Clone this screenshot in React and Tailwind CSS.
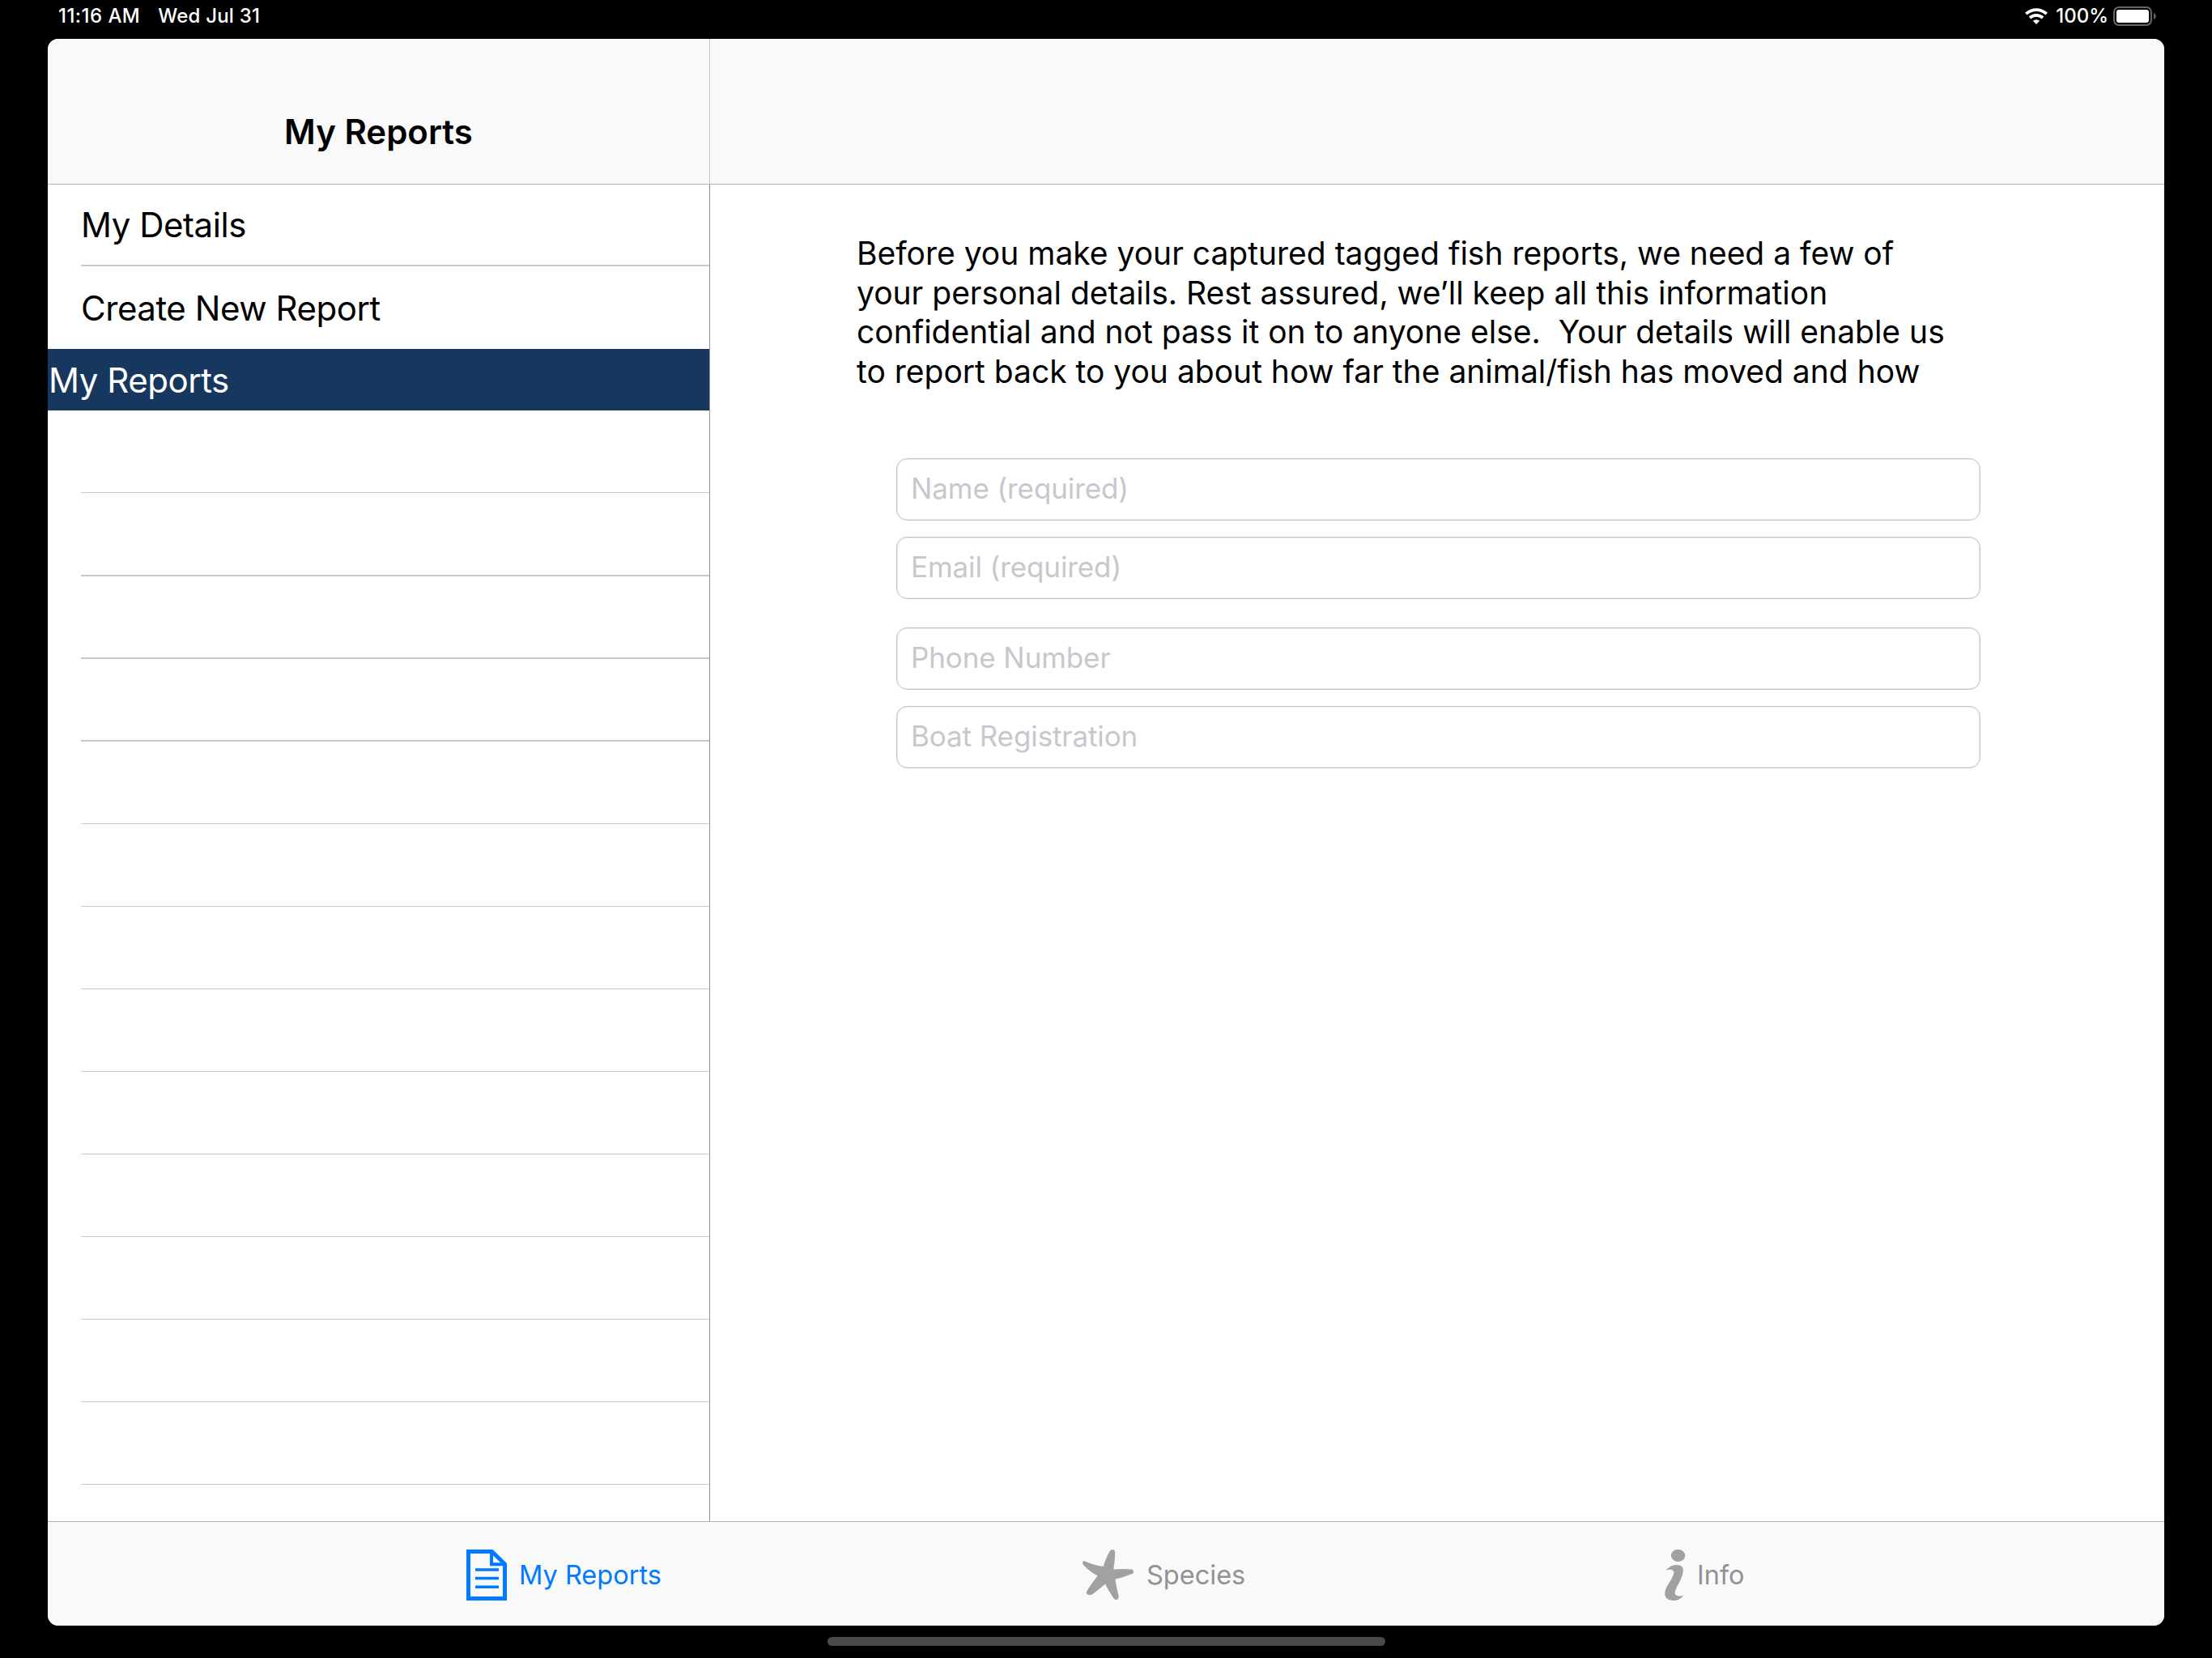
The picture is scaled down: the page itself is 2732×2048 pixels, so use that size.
const ROW_COUNT = 9;

const fields = [
  { name: 'name', label: 'Name (required)', className: '' },
  { name: 'email', label: 'Email (required)', className: 'mt-5' },
  { name: 'phone', label: 'Phone Number', className: 'mt-[35px]' },
  { name: 'boat', label: 'Boat Registration', className: 'mt-5' },
];

const WifiIcon = () => (
  <svg className="h-[20px] w-[28px]" viewBox="0 0 28 20" fill="none" stroke="#fff" strokeWidth="3.8">
    <path d="M1.3 7.2a18.2 18.2 0 0 1 25.4 0" />
    <path d="M6 12a11.6 11.6 0 0 1 16 0" />
    <path d="M14 20l-4.2-4.2a6.2 6.2 0 0 1 8.4 0z" fill="#fff" stroke="none" />
  </svg>
);

const BatteryIcon = () => (
  <svg className="h-[24px] w-[53px]" viewBox="0 0 53 24">
    <rect x="1" y="1" width="46" height="22" rx="6" fill="none" stroke="#666" strokeWidth="2" />
    <rect x="4" y="4" width="40" height="16" rx="3.2" fill="#fff" />
    <path d="M50 8c3.6 1.6 3.6 6.4 0 8z" fill="#666" />
  </svg>
);

const ReportIcon = () => (
  <svg className="h-[63px] w-[50px]" viewBox="0 0 50 63" fill="none" stroke="#007aff">
    <path d="M2.5 2.5H31.5L47.5 18V60.5H2.5z" strokeWidth="5" />
    <path d="M31 2V18.2H48" strokeWidth="4" />
    <path d="M11 25H40M11 35.5H40M11 46.3H40" strokeWidth="3.4" />
  </svg>
);

const StarfishIcon = () => (
  <svg className="h-[63px] w-[63px]" viewBox="0 0 63 63" fill="#a1a1a1">
    <path d="M35.5 0.3Q39.5-.8 40.2 3.5Q40.2 14 38.3 24.5Q50 23.3 61 24.500Q64 26 62.5 29.5Q52 34 40.3 36.7Q42 47 44.8 58Q44.5 62.5 40.5 62Q38.5 61 37 58Q31.5 50 28 42.5Q20.5 49.5 12 55.5Q7.5 57.5 5 54.5Q4.5 52 6.5 49.5Q12 40.5 18.7 32.5Q9 27.5 1 19Q-1 15.5 1.8 14Q14 19.5 25.7 21Q29 10 33.8 2Q34.5.8 35.5.3z" />
  </svg>
);

const InfoIcon = () => (
  <svg className="h-[63px] w-[25px]" viewBox="0 0 25 63" fill="#a1a1a1">
    <ellipse cx="16.5" cy="7.5" rx="8.7" ry="7.6" />
    <path d="M1.5 25.8C5 22 9 19.2 14 19C20 19 23.7 21.5 22.8 27.5C21.5 37 14.5 45 12.7 52.5C12 57.5 18 58.5 23.5 56.5C20 61 16 63 10.5 63C4 63 0 59.5 0.2 54C.6 45.5 9.5 37.5 11.3 29.5C12 25 7 23.5 1.5 25.8z" />
  </svg>
);

const StatusBar = () => (
  <div className="flex h-12 items-start justify-between pt-2 pr-[69px] pl-[72px] text-[24px] leading-6 font-medium text-white">
    <div className="flex gap-[22px]">
      <span className="tracking-[0.45px]">11:16 AM</span>
      <span className="tracking-[0.2px]">Wed Jul 31</span>
    </div>
    <div className="flex">
      <div className="mt-[2px] mr-[10px]">
        <WifiIcon />
      </div>
      <span className="mr-[6px]">100%</span>
      <BatteryIcon />
    </div>
  </div>
);

const Sidebar = () => (
  <div className="flex h-full w-[817px] flex-none flex-col overflow-hidden text-[42px] tracking-[-0.45px] whitespace-nowrap">
    <div className="flex h-[101px] flex-none flex-col pl-[41px]">
      <div className="flex flex-1 items-center">My Details</div>
      <div className="h-[2px] bg-[#c8c7cc]" />
    </div>
    <div className="flex h-[102px] flex-none items-center pl-[41px]">Create New Report</div>
    <div className="flex h-[76px] flex-none items-center bg-[#18375f] pl-px text-white">My Reports</div>
    {/* empty rows fill the rest of the list */}
    <div className="ml-[41px] h-[102px] flex-none border-b border-[#c8c7cc]" />
    <div className="ml-[41px] h-[103px] flex-none border-b-2 border-[#c8c7cc]" />
    <div className="ml-[41px] h-[102px] flex-none border-b-2 border-[#c8c7cc]" />
    <div className="ml-[41px] h-[102px] flex-none border-b-2 border-[#c8c7cc]" />
    {Array.from({ length: ROW_COUNT }, (_, i) => (
      <div key={i} className="ml-[41px] h-[102px] flex-none border-b border-[#c8c7cc]" />
    ))}
  </div>
);

const DetailsForm = () => (
  <div className="flex-1 pt-[61px] pl-[181px]">
    <p className="text-[39px] leading-[48.5px] whitespace-pre">
      Before you make your captured tagged fish reports, we need a few of<br />
      your personal details. Rest assured, we’ll keep all this information<br />
      confidential and not pass it on to anyone else.{'  '}Your details will enable us<br />
      to report back to you about how far the animal/fish has moved and how
    </p>
    <form className="mt-[83px] ml-[49px] flex w-[1339px] flex-col">
      {fields.map((field) => (
        <div key={field.name} className={field.className}>
          <input
            name={field.name}
            placeholder={field.label}
            className="block h-[77px] w-full rounded-[13px] border border-[#c6c6c6] pb-[3px] pl-[17px] text-[35px] tracking-[-0.1px] shadow-[inset_0_0_0_1px_#ebebeb] placeholder:text-[#c7c7cd]"
          />
        </div>
      ))}
    </form>
  </div>
);

const TabBar = () => (
  <div className="flex h-[129px] flex-none border-t border-[#b2b2b2] bg-[#f9f9f9] pt-[34px] text-[32.5px] leading-[63px] text-[#929292]">
    <div className="ml-[517px] flex w-[761px] gap-[15px] text-[#007aff]">
      <ReportIcon />
      <span>My Reports</span>
    </div>
    <div className="flex w-[719px] gap-[16px]">
      <StarfishIcon />
      <span>Species</span>
    </div>
    <div className="flex gap-[15px]">
      <InfoIcon />
      <span>Info</span>
    </div>
  </div>
);

const App = () => {
  return (
    <div className="flex h-[2048px] w-[2732px] flex-col bg-black font-['Inter',sans-serif] text-black">
      <StatusBar />
      <div className="mx-[59px] flex h-[1960px] flex-none flex-col overflow-hidden rounded-[13px] bg-white">
        <div className="flex h-[180px] flex-none border-b border-[#b2b2b2] bg-[#f9f9f9]">
          <div className="flex w-[818px] items-end justify-center border-r border-[#c4c4c4] pb-[33px] text-[42px] font-semibold">
            My Reports
          </div>
        </div>
        <div className="flex min-h-0 flex-1">
          <Sidebar />
          <div className="w-px flex-none bg-[#8e8e93]" />
          <DetailsForm />
        </div>
        <TabBar />
      </div>
      <div className="mt-[14px] h-[11px] w-[689px] self-center rounded-full bg-[#4a4a4a]" />
    </div>
  );
};

export default App;
